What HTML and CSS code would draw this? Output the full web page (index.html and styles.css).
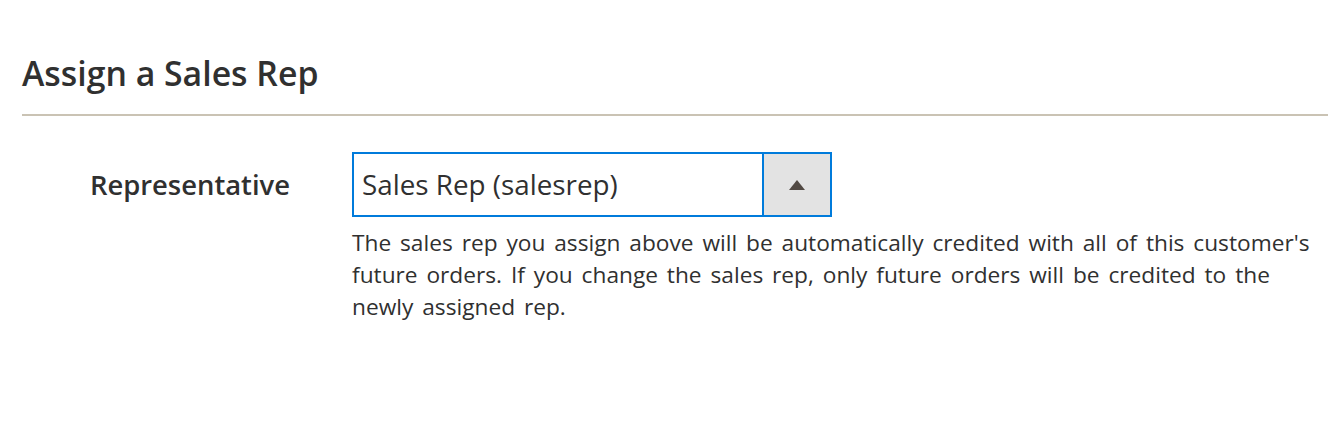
FILE: index.html
```html
<!DOCTYPE html>
<html>
<head>
<meta charset="utf-8">
<link rel="stylesheet" href="styles.css">
</head>
<body>
<section class="section">
  <h2 class="section-title">Assign a Sales Rep</h2>
  <div class="field">
    <label class="field-label" for="rep">Representative</label>
    <div class="field-control">
      <div class="select">
        <span class="select-value" id="rep">Sales Rep (salesrep)</span>
        <span class="select-button"><span class="select-arrow"></span></span>
      </div>
      <p class="field-note">The sales rep you assign above will be automatically credited with all of this customer's future orders. If you change the sales rep, only future orders will be credited to the newly assigned rep.</p>
    </div>
  </div>
</section>
</body>
</html>
```
FILE: styles.css
```css
html, body {
  margin: 0;
  padding: 0;
  background: #ffffff;
}
body {
  font-family: "Open Sans", "Liberation Sans", sans-serif;
  color: #303030;
  overflow: hidden;
}
.section {
  padding-left: 22px;
}
.section-title {
  margin: 0;
  padding-top: 50px;
  font-size: 33.8px;
  font-weight: 600;
  line-height: 46px;
  padding-bottom: 18px;
  border-bottom: 2px solid #cac3b4;
  color: #303030;
}
.field {
  display: flex;
  align-items: flex-start;
  margin-top: 36px;
}
.field-label {
  width: 268px;
  text-align: right;
  font-size: 27.4px;
  font-weight: 600;
  line-height: 65px;
  color: #303030;
}
.field-control {
  margin-left: 62px;
  flex: 1;
}
.select {
  display: flex;
  width: 480px;
  height: 65px;
  box-sizing: border-box;
  border: 2px solid #007bdb;
}
.select-value {
  flex: 1;
  padding-left: 8px;
  font-size: 27.8px;
  line-height: 61px;
  color: #303030;
}
.select-button {
  width: 66px;
  background: #e3e3e3;
  border-left: 2px solid #007bdb;
  display: flex;
  align-items: center;
  justify-content: center;
}
.select-arrow {
  width: 0;
  height: 0;
  border-left: 8px solid transparent;
  border-right: 8px solid transparent;
  border-bottom: 10px solid #514943;
}
.field-note {
  margin: 10px 0 0;
  max-width: 962px;
  font-size: 22.7px;
  word-spacing: 3px;
  line-height: 32px;
  color: #303030;
}
```
